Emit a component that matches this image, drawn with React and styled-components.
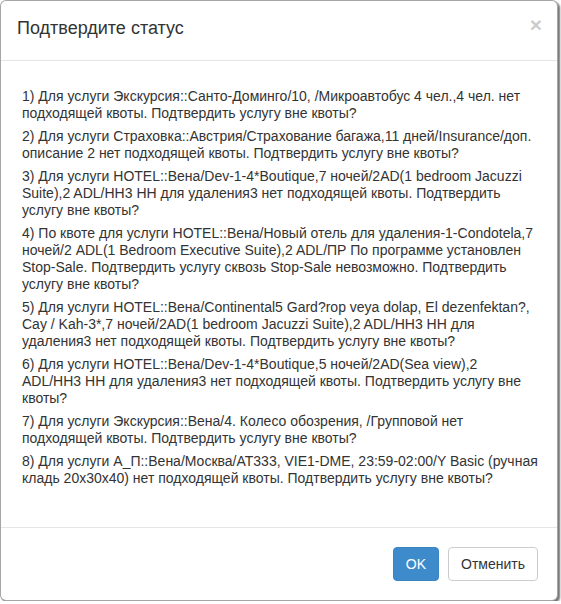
import React from 'react';
import styled, { createGlobalStyle } from 'styled-components';

// line breaks follow the reference dialog
const messages = [
  [
    '1) Для услуги Экскурсия::Санто-Доминго/10, /Микроавтобус 4 чел.,4 чел. нет',
    'подходящей квоты. Подтвердить услугу вне квоты?',
  ],
  [
    '2) Для услуги Страховка::Австрия/Страхование багажа,11 дней/Insurance/доп.',
    'описание 2 нет подходящей квоты. Подтвердить услугу вне квоты?',
  ],
  [
    '3) Для услуги HOTEL::Вена/Dev-1-4*Boutique,7 ночей/2AD(1 bedroom Jacuzzi',
    'Suite),2 ADL/HH3 HH для удаления3 нет подходящей квоты. Подтвердить',
    'услугу вне квоты?',
  ],
  [
    '4) По квоте для услуги HOTEL::Вена/Новый отель для удаления-1-Condotela,7',
    'ночей/2 ADL(1 Bedroom Executive Suite),2 ADL/ПР По программе установлен',
    'Stop-Sale. Подтвердить услугу сквозь Stop-Sale невозможно. Подтвердить',
    'услугу вне квоты?',
  ],
  [
    '5) Для услуги HOTEL::Вена/Continental5 Gard?rop veya dolap, El dezenfektan?,',
    'Cay / Kah-3*,7 ночей/2AD(1 bedroom Jacuzzi Suite),2 ADL/HH3 HH для',
    'удаления3 нет подходящей квоты. Подтвердить услугу вне квоты?',
  ],
  [
    '6) Для услуги HOTEL::Вена/Dev-1-4*Boutique,5 ночей/2AD(Sea view),2',
    'ADL/HH3 HH для удаления3 нет подходящей квоты. Подтвердить услугу вне',
    'квоты?',
  ],
  [
    '7) Для услуги Экскурсия::Вена/4. Колесо обозрения, /Групповой нет',
    'подходящей квоты. Подтвердить услугу вне квоты?',
  ],
  [
    '8) Для услуги А_П::Вена/Москва/AT333, VIE1-DME, 23:59-02:00/Y Basic (ручная',
    'кладь 20x30x40) нет подходящей квоты. Подтвердить услугу вне квоты?',
  ],
];

const GlobalStyle = createGlobalStyle`
  body {
    margin: 0;
    background: #fff;
    font-family: "Liberation Sans", Arial, sans-serif;
    color: #333;
  }
`;

const Modal = styled.div`
  box-sizing: border-box;
  width: 558px;
  height: 601px;
  display: flex;
  flex-direction: column;
  background: #fff;
  border: 1px solid rgba(0, 0, 0, 0.35);
  border-radius: 6px;
  box-shadow: 2px 2px 2px rgba(0, 0, 0, 0.55);
`;

const Header = styled.div`
  display: flex;
  justify-content: space-between;
  align-items: flex-start;
  padding: 15px 15px 18px 16px;
  border-bottom: 1px solid #e5e5e5;
`;

const Title = styled.h4`
  margin: 0;
  font-size: 18px;
  font-weight: normal;
  line-height: 1.42857;
  color: #333;
`;

const Close = styled.button`
  padding: 0;
  margin-top: -2px;
  border: 0;
  background: transparent;
  font-family: inherit;
  font-size: 21px;
  font-weight: bold;
  line-height: 1;
  color: #000;
  opacity: 0.2;
  cursor: pointer;
`;

const Body = styled.div`
  flex: 1;
  padding: 27px 12px 0 21px;
`;

const Message = styled.p`
  margin: 0 0 6px;
  font-size: 14px;
  line-height: 17px;
`;

const Line = styled.span`
  display: block;
  white-space: nowrap;
`;

const Footer = styled.div`
  display: flex;
  justify-content: flex-end;
  gap: 9px;
  padding: 19px 19px 19px 20px;
  border-top: 1px solid #e5e5e5;
`;

const Button = styled.button`
  box-sizing: border-box;
  height: 34px;
  padding: 6px 12px;
  font-family: inherit;
  font-size: 14px;
  line-height: 20px;
  border-radius: 4px;
  border: 1px solid ${(p) => (p.$primary ? '#3a84c3' : '#ccc')};
  background: ${(p) => (p.$primary ? '#3e8bcc' : '#fff')};
  color: ${(p) => (p.$primary ? '#fff' : '#333')};
  cursor: pointer;
`;

export default function App() {
  return (
    <>
      <GlobalStyle />
      <Modal>
        <Header>
          <Title>Подтвердите статус</Title>
          <Close>×</Close>
        </Header>
        <Body>
          {messages.map((lines) => (
            <Message key={lines[0]}>
              {lines.map((l) => (
                <Line key={l}>{l}</Line>
              ))}
            </Message>
          ))}
        </Body>
        <Footer>
          <Button $primary>OK</Button>
          <Button>Отменить</Button>
        </Footer>
      </Modal>
    </>
  );
}
